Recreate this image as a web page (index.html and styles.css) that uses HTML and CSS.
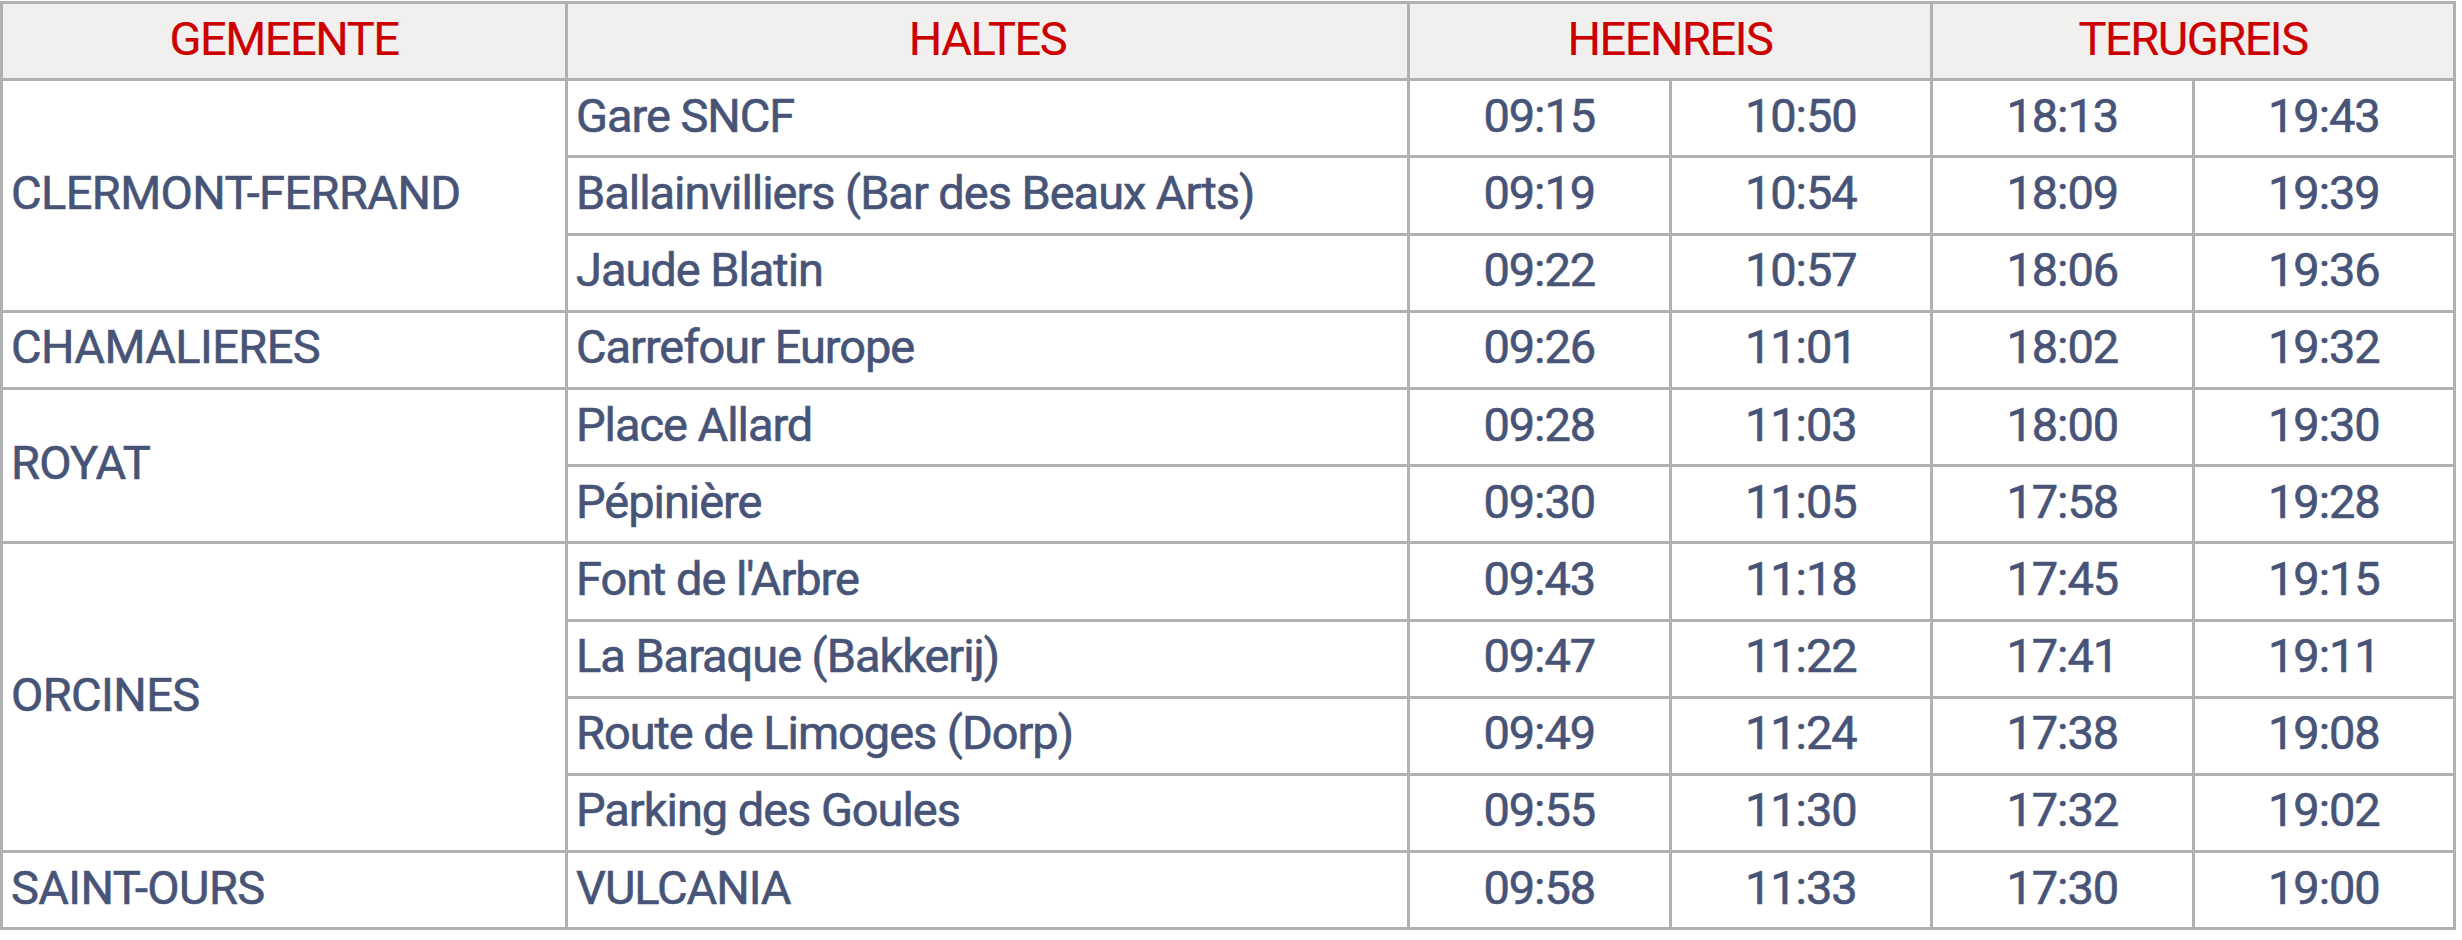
FILE: index.html
```html
<!DOCTYPE html>
<html lang="nl">
<head>
<meta charset="utf-8">
<title>Dienstregeling</title>
<link rel="stylesheet" href="styles.css">
</head>
<body>
<table class="schedule">
  <colgroup>
    <col class="c-town">
    <col class="c-stop">
    <col class="c-time">
    <col class="c-time">
    <col class="c-time">
    <col class="c-time">
  </colgroup>
  <thead>
    <tr>
      <th>GEMEENTE</th>
      <th>HALTES</th>
      <th colspan="2">HEENREIS</th>
      <th colspan="2">TERUGREIS</th>
    </tr>
  </thead>
  <tbody>
    <tr>
      <td class="town" rowspan="3">CLERMONT-FERRAND</td>
      <td class="stop">Gare SNCF</td>
      <td class="time">09:15</td><td class="time">10:50</td><td class="time">18:13</td><td class="time">19:43</td>
    </tr>
    <tr>
      <td class="stop">Ballainvilliers (Bar des Beaux Arts)</td>
      <td class="time">09:19</td><td class="time">10:54</td><td class="time">18:09</td><td class="time">19:39</td>
    </tr>
    <tr>
      <td class="stop">Jaude Blatin</td>
      <td class="time">09:22</td><td class="time">10:57</td><td class="time">18:06</td><td class="time">19:36</td>
    </tr>
    <tr>
      <td class="town">CHAMALIERES</td>
      <td class="stop">Carrefour Europe</td>
      <td class="time">09:26</td><td class="time">11:01</td><td class="time">18:02</td><td class="time">19:32</td>
    </tr>
    <tr>
      <td class="town" rowspan="2">ROYAT</td>
      <td class="stop">Place Allard</td>
      <td class="time">09:28</td><td class="time">11:03</td><td class="time">18:00</td><td class="time">19:30</td>
    </tr>
    <tr>
      <td class="stop">Pépinière</td>
      <td class="time">09:30</td><td class="time">11:05</td><td class="time">17:58</td><td class="time">19:28</td>
    </tr>
    <tr>
      <td class="town" rowspan="4">ORCINES</td>
      <td class="stop">Font de l'Arbre</td>
      <td class="time">09:43</td><td class="time">11:18</td><td class="time">17:45</td><td class="time">19:15</td>
    </tr>
    <tr>
      <td class="stop">La Baraque (Bakkerij)</td>
      <td class="time">09:47</td><td class="time">11:22</td><td class="time">17:41</td><td class="time">19:11</td>
    </tr>
    <tr>
      <td class="stop">Route de Limoges (Dorp)</td>
      <td class="time">09:49</td><td class="time">11:24</td><td class="time">17:38</td><td class="time">19:08</td>
    </tr>
    <tr>
      <td class="stop">Parking des Goules</td>
      <td class="time">09:55</td><td class="time">11:30</td><td class="time">17:32</td><td class="time">19:02</td>
    </tr>
    <tr>
      <td class="town">SAINT-OURS</td>
      <td class="stop">VULCANIA</td>
      <td class="time">09:58</td><td class="time">11:33</td><td class="time">17:30</td><td class="time">19:00</td>
    </tr>
  </tbody>
</table>
</body>
</html>
```

FILE: styles.css
```css
html, body {
  margin: 0;
  padding: 0;
  background: #ffffff;
}

body {
  padding-top: 1px;
  font-family: Roboto, "Liberation Sans", sans-serif;
}

.schedule {
  border-collapse: collapse;
  table-layout: fixed;
  width: 2456px;
  font-size: 47px;
  color: #475477;
}

.c-town { width: 565px; }
.c-stop { width: 842px; }
.c-time { width: 261.5px; }

.schedule th,
.schedule td {
  border: 3px solid #b1b1b1;
  height: 77.2px;
  padding: 0 8px 5px 8px;
  box-sizing: border-box;
  line-height: 1.15;
  white-space: nowrap;
  font-weight: 400;
}

.schedule th {
  background: #f1f0ef;
  color: #cc0000;
  text-align: center;
  letter-spacing: -1.5px;
  -webkit-text-stroke: 0.2px #cc0000;
}

.schedule td {
  -webkit-text-stroke: 0.6px #475477;
}

.town {
  text-align: left;
  letter-spacing: -0.6px;
}

.stop {
  text-align: left;
  letter-spacing: -1.05px;
}

.time {
  text-align: center;
  letter-spacing: -1.1px;
}
```
